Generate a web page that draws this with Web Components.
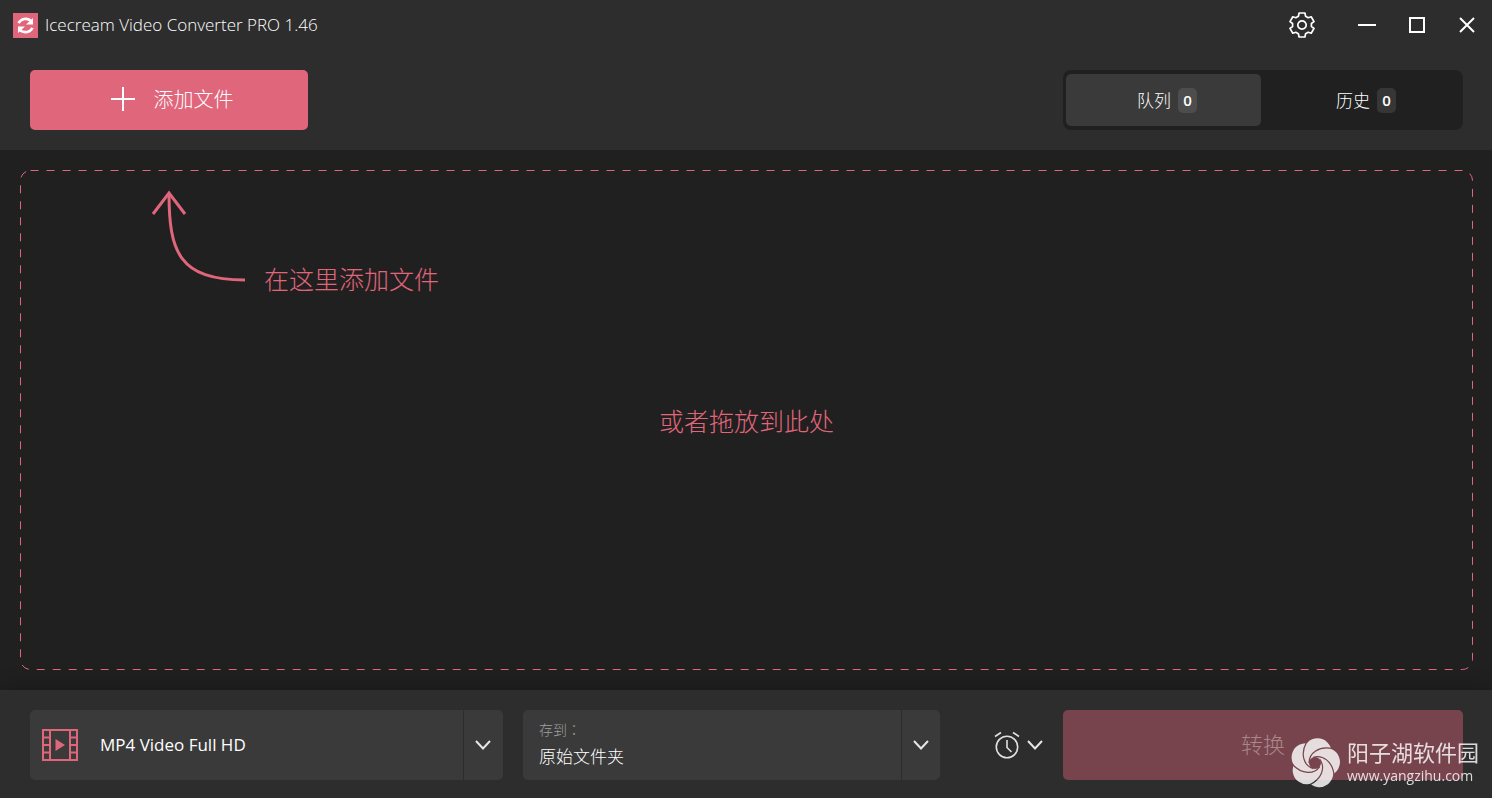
<!DOCTYPE html>
<html lang="zh-CN">
<head>
<meta charset="utf-8">
<title>Icecream Video Converter PRO 1.46</title>
<style>
  :root {
    --accent: #e0667b;
    --bar: #2d2d2d;
    --stage: #202020;
    --field: #3a3a3a;
  }
  body {
    margin: 0;
    color: #fff;
    background: var(--stage);
    font-family: "Open Sans", "Noto Sans CJK SC", sans-serif;
    font-size: 17px;
    line-height: 24px;
  }
</style>
</head>
<body>
<converter-app></converter-app>

<script>
// Shared by every element: opens the shadow root and fills it
class BaseElement extends HTMLElement {
  constructor() {
    super();
    const template = document.createElement("template");
    template.innerHTML = `
      <style>
        * { box-sizing: border-box; }
        button, select { font: inherit; color: inherit; border: 0; margin: 0; padding: 0; background: none; cursor: pointer; }
        svg { display: block; flex: none; }
        .cjk { font-family: "Noto Sans CJK SC", sans-serif; font-weight: 300; }
      </style>
      ${this.render()}
    `;
    this.attachShadow({ mode: "open" }).append(template.content.cloneNode(true));
  }
}

const chevron = `
  <svg width="16" height="10" viewBox="0 0 16 10" fill="none" stroke="#e6e6e6" stroke-width="2">
    <path d="M1 1l7 7.500 7-7.500"/>
  </svg>`;

class TitleBar extends BaseElement {
  render() {
    return `
      <style>
        :host { display: flex; align-items: center; height: 50px; padding-left: 13px; background: var(--bar); }
        h1 { flex: 1; margin: 0 0 0 7px; font-size: 17px; font-weight: 300; }
        button { display: grid; place-items: center; width: 50px; height: 50px; }
        .settings { margin-right: 15px; }
      </style>
      <svg width="25" height="25" viewBox="0 0 25 25">
        <rect width="25" height="25" fill="#e0667b"/>
        <g fill="none" stroke="#fff" stroke-width="2.600">
          <path d="M5.500 10.200C8 5.500 14 4.500 18 7.700"/>
          <path d="M19.500 14.800C17 19.500 11 20.500 7 17.300"/>
        </g>
        <path d="M20 5v6.500h-7zM5 20v-6.500h7z" fill="#fff"/>
      </svg>
      <h1><slot></slot></h1>
      <button class="settings" aria-label="设置">
        <svg width="26" height="26" viewBox="-13 -13 26 26" fill="none" stroke="#fff" stroke-width="1.700" stroke-linejoin="round">
          <path d="M-2.900-12H2.900L3.600-8.800 6.200-7.300 9.200-8.200 12-3.400 9.400-1.500V1.500L12 3.400 9.200 8.200 6.200 7.300 3.600 8.800 2.900 12H-2.900L-3.600 8.800-6.200 7.300-9.200 8.200-12 3.400-9.400 1.500V-1.500L-12-3.400-9.200-8.200-6.200-7.300-3.600-8.800z"/>
          <circle r="4.200"/>
        </svg>
      </button>
      <button aria-label="最小化">
        <svg width="18" height="18" stroke="#fff" stroke-width="2"><path d="M0 9h18"/></svg>
      </button>
      <button aria-label="最大化">
        <svg width="16" height="16" fill="none" stroke="#fff" stroke-width="2"><rect x="1" y="1" width="14" height="14"/></svg>
      </button>
      <button aria-label="关闭">
        <svg width="16" height="16" fill="none" stroke="#fff" stroke-width="2"><path d="M1 1l14 14M15 1L1 15"/></svg>
      </button>
    `;
  }
}

class AddButton extends BaseElement {
  render() {
    return `
      <style>
        :host { display: block; width: 278px; }
        button {
          display: flex; align-items: center; justify-content: center; gap: 19px;
          width: 100%; height: 60px; padding: 0 6px 2px 12px;
          border-radius: 5px; background: var(--accent); font-size: 20px;
        }
      </style>
      <button class="cjk">
        <svg width="24" height="24" stroke="#fff" stroke-width="2"><path d="M12 0v24M0 12h24"/></svg>
        <slot></slot>
      </button>
    `;
  }
}

class ViewTabs extends BaseElement {
  render() {
    return `
      <style>
        :host { display: flex; gap: 4px; width: 400px; height: 60px; padding: 4px 3px; border-radius: 8px; background: var(--stage); }
        button { flex: 1; display: flex; align-items: center; justify-content: center; gap: 7px; padding-left: 7px; border-radius: 5px; }
        button[aria-selected=true] { background: var(--field); }
        b {
          width: 19px; height: 25px; border-radius: 5px; background: #363636;
          font: 600 15px/25px "Open Sans", sans-serif; text-align: center;
        }
        [aria-selected=true] b { background: #4d4d4d; }
      </style>
      <button role="tab" aria-selected="true" class="cjk">队列<b>0</b></button>
      <button role="tab" aria-selected="false" class="cjk">历史<b>0</b></button>
    `;
  }

  connectedCallback() {
    this.setAttribute("role", "tablist");
    const tabs = this.shadowRoot.querySelectorAll("button");
    tabs.forEach((tab) => {
      tab.addEventListener("click", () => {
        tabs.forEach((t) => t.setAttribute("aria-selected", t === tab));
      });
    });
  }
}

class DropZone extends BaseElement {
  render() {
    return `
      <style>
        :host { display: grid; color: var(--accent); font-size: 25px; line-height: 36px; }
        :host > * { grid-area: 1 / 1; }
        .frame { width: 100%; height: 100%; min-height: 0; overflow: hidden; contain: size; }
        .frame rect { width: calc(100% - 1px); height: calc(100% - 1px); }
        .hint { display: flex; align-items: flex-end; align-self: start; gap: 19px; padding: 20px 20px 0 131px; }
        .hint svg { margin-bottom: 14px; }
        p { margin: 0; }
        .drop { place-self: center; }
      </style>
      <svg class="frame" fill="none" stroke="#e0667b">
        <rect x="0.500" y="0.500" rx="10" stroke-dasharray="8"/>
      </svg>
      <div class="hint cjk">
        <svg width="94" height="92" fill="none" stroke="#e0667b" stroke-width="3">
          <path d="M2 24L18 3l16 21"/>
          <path d="M18 3C18 62 28 90 94 90"/>
        </svg>
        <p><slot name="hint"></slot></p>
      </div>
      <p class="drop cjk"><slot></slot></p>
    `;
  }
}

class FormatPicker extends BaseElement {
  render() {
    return `
      <style>
        :host { display: grid; height: 70px; border-radius: 5px; background: var(--field); }
        :host > * { grid-area: 1 / 1; }
        select { appearance: none; width: 100%; padding: 0 50px 0 70px; outline-offset: -2px; }
        option { background: var(--field); }
        .icon { place-self: center start; margin-left: 12px; pointer-events: none; }
        .arrow { justify-self: end; display: grid; place-items: center; width: 40px; padding-right: 2px; border-left: 1px solid var(--bar); pointer-events: none; }
      </style>
      <select aria-label="输出格式">
        <option>MP4 Video Full HD</option>
      </select>
      <svg class="icon" width="36" height="32" viewBox="0 0 36 32" fill="none" stroke="#e0667b" stroke-width="2">
        <rect x="1" y="1" width="34" height="30"/>
        <path d="M8 1v30M28 1v30M1 8.500h7M1 16h7M1 23.500h7M28 8.500h7M28 16h7M28 23.500h7"/>
        <path d="M13.500 10v12l9.500-6z" fill="#e0667b" stroke="none"/>
      </svg>
      <span class="arrow">${chevron}</span>
    `;
  }
}

class FolderPicker extends BaseElement {
  render() {
    return `
      <style>
        :host { display: grid; height: 70px; border-radius: 5px; background: var(--field); }
        :host > * { grid-area: 1 / 1; }
        label {
          align-self: start; padding: 9px 0 0 16px; color: #a0a0a0;
          font: 300 14px/20px "Noto Sans CJK TC", sans-serif; pointer-events: none;
        }
        select { appearance: none; width: 100%; padding: 22px 50px 0 16px; font-size: 17px; outline-offset: -2px; }
        option { background: var(--field); }
        .arrow { justify-self: end; display: grid; place-items: center; width: 39px; border-left: 1px solid var(--bar); pointer-events: none; }
      </style>
      <select id="folder" class="cjk">
        <option>原始文件夹</option>
      </select>
      <label for="folder" lang="zh-TW">存到：</label>
      <span class="arrow">${chevron}</span>
    `;
  }
}

class AlarmButton extends BaseElement {
  render() {
    return `
      <style>
        :host { display: flex; justify-content: flex-end; width: 83px; }
        button { display: flex; align-items: center; gap: 7px; height: 70px; }
      </style>
      <button aria-label="完成后">
        <svg width="26" height="28" viewBox="0 0 26 28" fill="none" stroke="#e0e0e0" stroke-width="1.600">
          <circle cx="13" cy="16" r="10.700"/>
          <path d="M13 9v7.500l4.500 4.500M1 5.500l6-4M25 5.500l-6-4"/>
        </svg>
        ${chevron}
      </button>
    `;
  }
}

class ConvertButton extends BaseElement {
  render() {
    return `
      <style>
        :host { display: block; width: 400px; }
        button { width: 100%; height: 70px; padding-bottom: 4px; border-radius: 5px; background: #77444d; color: #a8868b; font-size: 22px; cursor: default; }
      </style>
      <button class="cjk" disabled><slot></slot></button>
    `;
  }
}

class SiteMark extends BaseElement {
  render() {
    const turns = [0, 72, 144, 216, 288];
    const petals = turns.map((a) => `<circle cx="2.500" cy="-10.700" r="14" transform="rotate(${a})"/>`).join("");
    // each gap leaves the hole along its edge and ends in a notch of the outline
    const gaps = turns.map((a) => `<path d="M-6 0C-6-10 4-17 17-14.500" transform="rotate(${a})"/>`).join("");
    return `
      <style>
        :host { display: flex; align-items: center; gap: 7px; color: #fff; opacity: .82; pointer-events: none; }
        strong { display: block; font: 400 22px/26px "Noto Sans CJK SC", sans-serif; }
        span { display: block; font: 400 14px/24px "Open Sans", sans-serif; }
      </style>
      <svg width="50" height="50" viewBox="-25 -25 50 50">
        <mask id="swirl" maskUnits="userSpaceOnUse" x="-25" y="-25" width="50" height="50">
          <g fill="#fff">${petals}</g>
          <circle r="6"/>
          <g fill="none" stroke="#000" stroke-width="1.200">${gaps}</g>
        </mask>
        <rect x="-25" y="-25" width="50" height="50" fill="#fff" mask="url(#swirl)"/>
      </svg>
      <div>
        <strong>阳子湖软件园</strong>
        <span>www.yangzihu.com</span>
      </div>
    `;
  }
}

class ConverterApp extends BaseElement {
  render() {
    return `
      <style>
        :host { display: flex; flex-direction: column; position: relative; min-height: 100vh; }
        .toolbar { display: flex; justify-content: space-between; padding: 20px 29px 20px 30px; background: var(--bar); }
        main { flex: 1; display: grid; padding: 20px 19px 20px 20px; }
        footer {
          display: flex; gap: 20px; padding: 20px 29px 18px 30px;
          background: var(--bar); box-shadow: 0 0 20px rgba(0, 0, 0, .3);
        }
        format-picker { flex: 473 1 0; }
        folder-picker { flex: 417 1 0; }
        site-mark { position: absolute; right: 13px; bottom: 10px; }
      </style>
      <title-bar>Icecream Video Converter PRO 1.46</title-bar>
      <div class="toolbar">
        <add-button>添加文件</add-button>
        <view-tabs></view-tabs>
      </div>
      <main>
        <drop-zone>
          <span slot="hint">在这里添加文件</span>
          或者拖放到此处
        </drop-zone>
      </main>
      <footer>
        <format-picker></format-picker>
        <folder-picker></folder-picker>
        <alarm-button></alarm-button>
        <convert-button>转换</convert-button>
      </footer>
      <site-mark></site-mark>
    `;
  }
}

customElements.define("title-bar", TitleBar);
customElements.define("add-button", AddButton);
customElements.define("view-tabs", ViewTabs);
customElements.define("drop-zone", DropZone);
customElements.define("format-picker", FormatPicker);
customElements.define("folder-picker", FolderPicker);
customElements.define("alarm-button", AlarmButton);
customElements.define("convert-button", ConvertButton);
customElements.define("site-mark", SiteMark);
customElements.define("converter-app", ConverterApp);
</script>
</body>
</html>
